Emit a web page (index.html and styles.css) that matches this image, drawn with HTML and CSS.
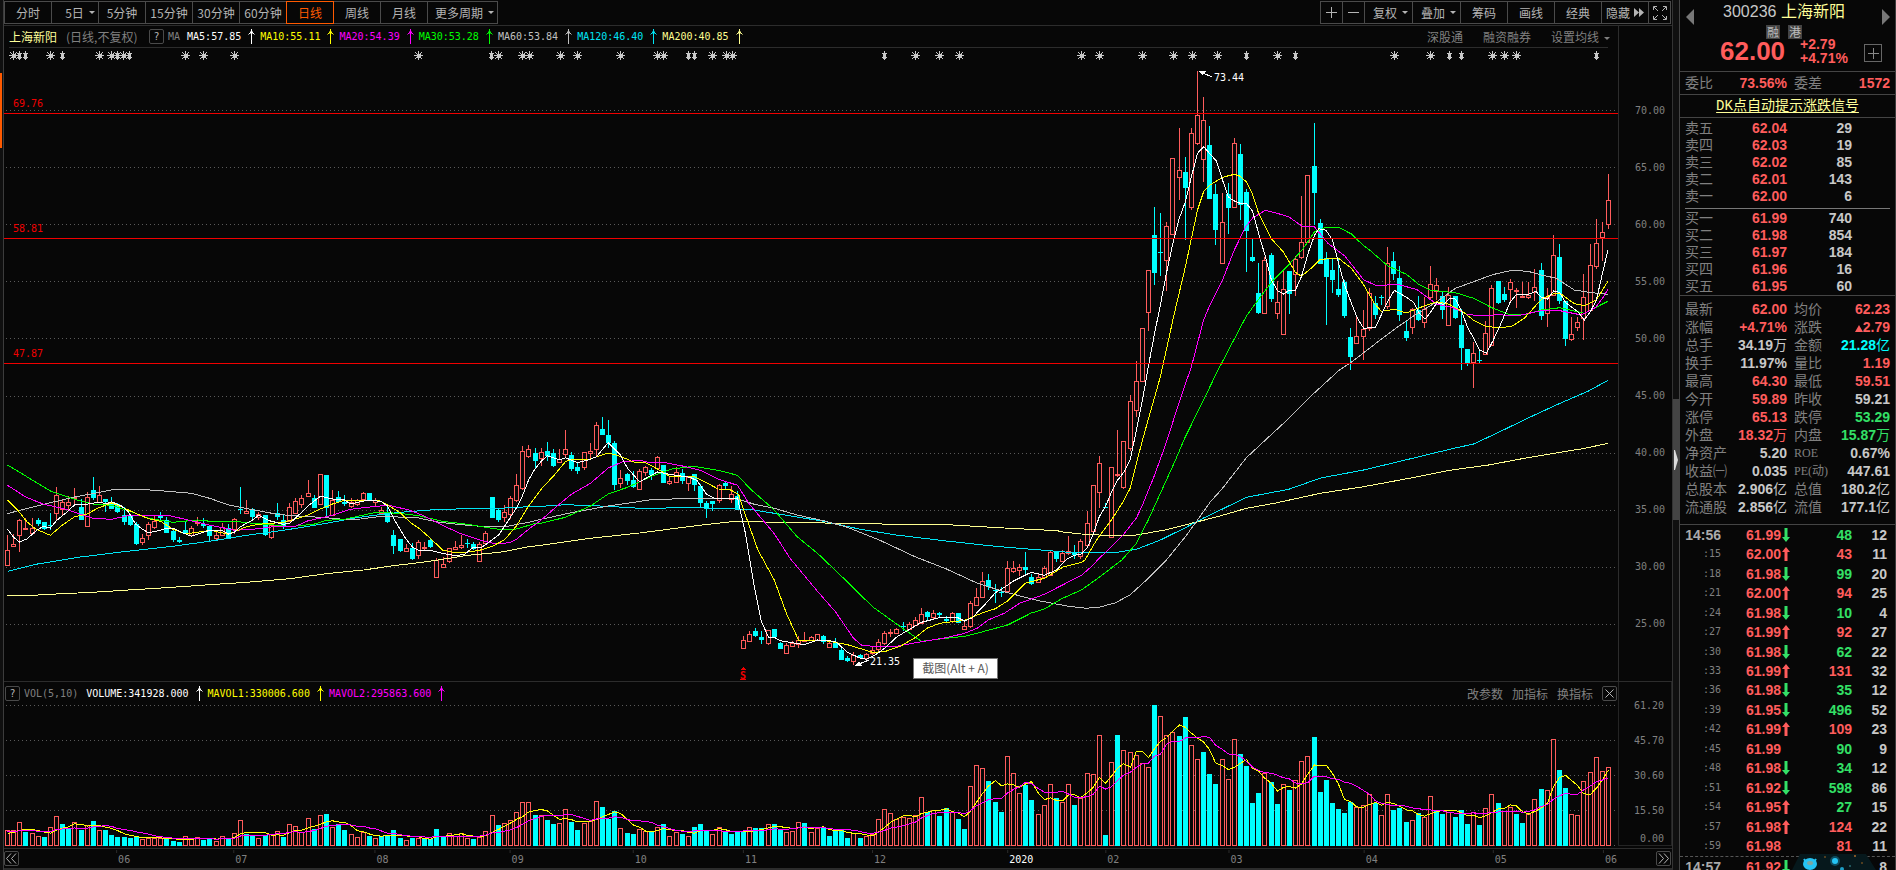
FILE: index.html
```html
<!DOCTYPE html>
<html lang="zh-CN">
<head>
<meta charset="utf-8">
<title>上海新阳 300236</title>
<link rel="stylesheet" href="styles.css">
</head>
<body>
<svg class="defs" aria-hidden="true">
  <symbol id="up" viewBox="0 0 7 15"><path d="M3.5 0v15M0.5 5.5l3-3 3 3M2.5 2.5v2M4.5 2.5v2" fill="none" stroke="currentColor" stroke-width="1"/></symbol>
  <symbol id="tick-up" viewBox="0 0 8 14"><path d="M4 0l4 5H5.500v9h-3V5H0z" fill="currentColor"/></symbol>
  <symbol id="tick-down" viewBox="0 0 8 14"><path d="M4 14l4-5H5.500V0h-3v9H0z" fill="currentColor"/></symbol>
</svg>
<div class="app">
  <aside class="rail"><i class="rail-mark"></i></aside>

  <main class="main">
    <nav class="toolbar">
      <div class="group periods">
        <button>分时</button><button class="drop">5日</button><button>5分钟</button><button>15分钟</button><button>30分钟</button><button>60分钟</button><button class="active">日线</button><button>周线</button><button>月线</button><button class="drop wide">更多周期</button>
      </div>
      <div class="group tools">
        <button class="sq" aria-label="放大"><svg width="13" height="13"><path d="M6.500 1v11M1 6.500h11"/></svg></button><button class="sq" aria-label="缩小"><svg width="13" height="13"><path d="M1 6.500h11"/></svg></button><button class="drop">复权</button><button class="drop">叠加</button><button>筹码</button><button>画线</button><button>经典</button><button class="hide">隐藏<svg width="10" height="9"><path class="solid" d="M0 0l5 4.500-5 4.500zM5 0l5 4.500-5 4.500z"/></svg></button><button class="sq" aria-label="全屏"><svg width="14" height="14"><path d="M.5 4V.5H4M10 .5h3.500V4M13.500 10v3.500H10M4 13.500H.5V10M1 1l4 4M13 1L9 5M13 13L9 9M1 13l4-4"/></svg></button>
      </div>
    </nav>

    <section class="price">
      <div class="plot">
        <header class="legend">
          <span class="name">上海新阳</span><span class="mode">(日线,不复权)</span><button class="help">?</button><span class="ma">MA</span>
          <span class="ind c-w">MA5:57.85<svg><use href="#up"/></svg></span><span class="ind c-y">MA10:55.11<svg><use href="#up"/></svg></span><span class="ind c-m">MA20:54.39<svg><use href="#up"/></svg></span><span class="ind c-g">MA30:53.28<svg><use href="#up"/></svg></span><span class="ind c-s">MA60:53.84<svg><use href="#up"/></svg></span><span class="ind c-c">MA120:46.40<svg><use href="#up"/></svg></span><span class="ind c-l">MA200:40.85<svg><use href="#up"/></svg></span>
          <span class="links"><a href="#">深股通</a><a href="#">融资融券</a><a href="#" class="drop">设置均线</a></span>
        </header>
        <svg id="price" class="chart" viewBox="4 48 1614 633" preserveAspectRatio="none"></svg>
      </div>
      <div class="axis"><span>70.00</span><span>65.00</span><span>60.00</span><span>55.00</span><span>50.00</span><span>45.00</span><span>40.00</span><span>35.00</span><span>30.00</span><span>25.00</span></div>
      <div class="tooltip" role="tooltip">截图(Alt + A)</div>
    </section>

    <section class="volume">
      <div class="plot">
        <header class="legend">
          <button class="help">?</button><span class="vol">VOL(5,10)</span>
          <span class="ind c-w">VOLUME:341928.000<svg><use href="#up"/></svg></span><span class="ind c-y">MAVOL1:330006.600<svg><use href="#up"/></svg></span><span class="ind c-m">MAVOL2:295863.600<svg><use href="#up"/></svg></span>
          <span class="links"><a href="#">改参数</a><a href="#">加指标</a><a href="#">换指标</a><button class="help" aria-label="关闭"><svg width="9" height="9"><path d="M.5.5l8 8M8.500.5l-8 8"/></svg></button></span>
        </header>
        <svg id="volume" class="chart" viewBox="4 703 1614 145" preserveAspectRatio="none"></svg>
      </div>
      <div class="axis"><span>61.20</span><span>45.70</span><span>30.60</span><span>15.50</span><span class="zero">0.00</span></div>
    </section>

    <footer class="dates">
      <button class="help" aria-label="向前"><svg width="11" height="11"><path d="M5 .5l-4.500 5 4.500 5M10 .5l-4.500 5 4.500 5"/></svg></button>
      <svg id="dates" viewBox="20 849 1635 18" preserveAspectRatio="none"></svg>
      <button class="help" aria-label="向后"><svg width="11" height="11"><path d="M1 .5l4.500 5-4.500 5M6 .5l4.500 5-4.500 5"/></svg></button>
    </footer>
  </main>

  <div class="splitter"><i class="thumb"><svg width="4" height="20"><path d="M0 0h1l3 10-3 10H0z"/></svg></i></div>

  <aside class="quote">
    <header class="head">
      <button class="prev" aria-label="上一只"></button>
      <div class="title"><span class="code">300236</span> <span class="stock">上海新阳</span></div>
      <button class="next" aria-label="下一只"></button>
      <div class="tags"><b>融</b><b>港</b></div>
      <div class="last"><strong>62.00</strong><div class="chg"><span>+2.79</span><span>+4.71%</span></div><button class="add" aria-label="加自选"><svg width="11" height="11"><path d="M5.500 0v11M0 5.500h11"/></svg></button></div>
    </header>
    <div class="ratio"><span>委比</span><b class="r">73.56%</b><span>委差</span><b class="r">1572</b></div>
    <div class="signal"><a href="#">DK点自动提示涨跌信号</a></div>
    <table class="book">
      <tbody>
      <tr><th>卖五</th><td class="r">62.04</td><td>29</td></tr>
      <tr><th>卖四</th><td class="r">62.03</td><td>19</td></tr>
      <tr><th>卖三</th><td class="r">62.02</td><td>85</td></tr>
      <tr><th>卖二</th><td class="r">62.01</td><td>143</td></tr>
      <tr><th>卖一</th><td class="r">62.00</td><td>6</td></tr>
      </tbody>
    </table>
    <hr class="spread">
    <table class="book">
      <tbody>
      <tr><th>买一</th><td class="r">61.99</td><td>740</td></tr>
      <tr><th>买二</th><td class="r">61.98</td><td>854</td></tr>
      <tr><th>买三</th><td class="r">61.97</td><td>184</td></tr>
      <tr><th>买四</th><td class="r">61.96</td><td>16</td></tr>
      <tr><th>买五</th><td class="r">61.95</td><td>60</td></tr>
      </tbody>
    </table>
    <table class="stats">
      <tbody>
      <tr><th>最新</th><td class="r">62.00</td><th>均价</th><td class="r">62.23</td></tr>
      <tr><th>涨幅</th><td class="r">+4.71%</td><th>涨跌</th><td class="r"><i class="tri"></i>2.79</td></tr>
      <tr><th>总手</th><td>34.19<em>万</em></td><th>金额</th><td class="c">21.28<em>亿</em></td></tr>
      <tr><th>换手</th><td>11.97%</td><th>量比</th><td class="r">1.19</td></tr>
      <tr><th>最高</th><td class="r">64.30</td><th>最低</th><td class="r">59.51</td></tr>
      <tr><th>今开</th><td class="r">59.89</td><th>昨收</th><td>59.21</td></tr>
      <tr><th>涨停</th><td class="r">65.13</td><th>跌停</th><td class="g">53.29</td></tr>
      <tr><th>外盘</th><td class="r">18.32<em>万</em></td><th>内盘</th><td class="g">15.87<em>万</em></td></tr>
      <tr><th>净资产</th><td>5.20</td><th class="lat">ROE</th><td>0.67%</td></tr>
      <tr><th>收益㈠</th><td>0.035</td><th class="lat">PE(动)</th><td>447.61</td></tr>
      <tr><th>总股本</th><td>2.906<em>亿</em></td><th>总值</th><td>180.2<em>亿</em></td></tr>
      <tr><th>流通股</th><td>2.856<em>亿</em></td><th>流值</th><td>177.1<em>亿</em></td></tr>
      </tbody>
    </table>
    <div id="ticks" class="ticks"></div>
    <div id="next-minute" class="ticks minute"></div>
    <svg class="pet" viewBox="0 0 84 17" aria-hidden="true">
      <path d="M8 1h66l10 16H0z" fill="#06181c"/>
      <ellipse cx="18" cy="11" rx="7" ry="6" fill="#25c4f4"/><ellipse cx="18" cy="10" rx="3" ry="2" fill="#7ba7a4"/><path d="M12 6l2 3M24 6l-2 3" stroke="#25c4f4" stroke-width="2"/>
      <circle cx="43" cy="8" r="3" fill="#25c4f4"/><circle cx="43" cy="8" r="5" fill="#25c4f4" opacity=".3"/>
      <circle cx="50" cy="16" r="2" fill="#1e9ec4"/><circle cx="63" cy="3" r="1" fill="#a86a2c"/><circle cx="33" cy="4" r="1" fill="#6a4a20"/><circle cx="70" cy="10" r="1" fill="#6a4a20"/><circle cx="58" cy="13" r="1" fill="#2a6a70"/>
    </svg>
  </aside>
</div>
<script src="chart.js"></script>
</body>
</html>
```
FILE: styles.css
```css
* { box-sizing: border-box; }
body {
  margin: 0;
  background: #070707;
  color: #808080;
  font: 12px/1 "Liberation Sans", "Noto Sans CJK SC", sans-serif;
}
button { margin: 0; padding: 0; background: none; border: 1px solid #4a4a4a; color: #b4b4b4; font: inherit; }
a { color: inherit; text-decoration: none; }
svg { display: block; }
.defs { position: absolute; width: 0; height: 0; }
.app { display: grid; grid-template-columns: 4px minmax(0, 1fr) 7px 216px; height: 100vh; overflow: hidden; }

.rail { background: #101010; border-right: 1px solid #3c3c3c; padding-top: 73px; }
.rail-mark { display: block; width: 2px; height: 75px; background: #ff5a00; }

.main { display: flex; flex-direction: column; border-right: 1px solid #333; border-bottom: 2px solid #2c2c2c; min-width: 0; }
.toolbar { display: flex; justify-content: space-between; height: 25px; padding: 1px 1px 1px 0; }
.group { display: flex; }
.group button { display: flex; align-items: center; justify-content: center; width: 48px; height: 23px; margin-right: -1px; font-family: "Noto Sans CJK SC", sans-serif; }
.group .sq { width: 23px; }
.group .wide { width: 71px; }
.tools .drop { width: 49px; }
.group button:last-child { margin-right: 0; }
.group .active { position: relative; border-color: #ff5a00; color: #ff5a00; }
.drop::after { content: ""; display: inline-block; border: 3px solid transparent; border-top-color: currentColor; border-bottom: 0; margin-left: 5px; vertical-align: middle; }
.group .drop { padding-left: 4px; }
.periods .drop:nth-child(2) { padding-left: 10px; }
.toolbar svg, .help svg, .add svg { fill: none; stroke: currentColor; }
.toolbar .solid { fill: currentColor; stroke: none; }
.hide svg { margin-left: 4px; }

.price { position: relative; display: flex; flex: 1; min-height: 0; border-top: 1px solid #2c2c2c; }
.volume { display: flex; height: 167px; border-top: 1px solid #2c2c2c; }
.plot { flex: 1; min-width: 0; display: flex; flex-direction: column; }
.chart { flex: 1; width: 100%; min-height: 0; }
.legend { display: flex; align-items: center; height: 22px; border-bottom: 1px solid #2c2c2c; margin: 0 10px 0 5px; white-space: nowrap; }
.volume .legend { height: 21px; border: 0; margin: 0 1px; padding-top: 2px; }
.help { display: flex; align-items: center; justify-content: center; width: 15px; height: 15px; border-radius: 2px; flex: none; font: 10px/1 "DejaVu Sans Mono", monospace; }
.name { color: #ffff99; font-family: "Noto Sans CJK SC", sans-serif; margin-right: 9px; }
.mode { font-family: "Noto Sans CJK SC", sans-serif; width: 83px; }
.ma, .vol, .ind, .axis, .chart text, #dates text { font: 10px/1 "DejaVu Sans Mono", monospace; }
.ma { margin: 0 7px 0 4px; }
.vol { margin: 0 8px 0 4px; }
.ind { display: flex; align-items: center; }
.ind svg { width: 7px; height: 15px; margin: 0 5px 0 7px; }
.c-w { color: #fff; } .c-y { color: #ff0; } .c-m { color: #f0f; } .c-g { color: #0f0; }
.c-s { color: #c0c0c0; } .c-c { color: #00e5f5; } .c-l { color: #ffff90; }
.links { margin-left: auto; display: flex; align-items: center; gap: 20px; font-family: "Noto Sans CJK SC", sans-serif; }
.price .links { margin-right: -2px; }
.volume .links { gap: 9px; }

.axis { width: 54px; padding: 56px 7px 0 0; border-left: 1px solid #2c2c2c; text-align: right; overflow: hidden; }
.axis span { display: block; line-height: 57px; }
.volume .axis { padding-top: 6px; border: 1px solid #242424; border-top: 0; margin-bottom: 2px; }
.volume .axis span { line-height: 35px; }
.volume .axis .zero { line-height: 21px; }
.tooltip { position: absolute; left: 909px; bottom: 2px; width: 85px; height: 21px; text-align: center; background: #fff; border: 1px solid #767676; color: #575757; font: 12px/18px "Noto Sans CJK SC", sans-serif; }

.dates { display: flex; align-items: center; height: 20px; border-top: 1px solid #2c2c2c; padding: 0 1px 0 0; }
#dates { flex: 1; min-width: 0; height: 18px; }

.chart path, .chart rect, .chart line { shape-rendering: crispEdges; }
.grid { stroke: #5a5a5a; stroke-dasharray: 1 3; }
.level { stroke: #f00000; }
.up { fill: #070707; stroke: #ff5c5c; }
.down { fill: #0ff; }
.wick-up { stroke: #ff5c5c; }
.wick-down { stroke: #0ff; }
.line { fill: none; stroke: currentColor; }
.mark { fill: #c8c8c8; stroke: #c8c8c8; }
.note { fill: #fff; }
.red { fill: #f00000; }
.chart .split { font-weight: bold; }
#dates text { fill: #808080; }
#dates .year { fill: #fff; }
#dates line { stroke: #2c2c2c; }

.splitter { background: #101010; border-right: 1px solid #444; padding-top: 399px; }
.thumb { display: flex; align-items: center; height: 121px; background: #444; padding-left: 1px; }
.thumb svg { fill: #ddd; }

.quote { position: relative; display: flex; flex-direction: column; overflow: hidden; border-right: 1px solid #3c3c3c; font: 14px/1 "Liberation Sans", "Noto Sans CJK SC", sans-serif; }
.head { display: grid; grid-template-columns: 15px 1fr 15px; height: 72px; border-bottom: 1px solid #444; padding: 3px 5px 0 6px; grid-template-rows: 22px 14px 30px; }
.title { font-size: 16px; line-height: 18px; text-align: center; color: #c8c8c8; padding-right: 8px; }
.stock { color: #ffff99; }
.prev, .next { border: 8px solid transparent; border-left-width: 0; border-right: 8px solid #777; width: 8px; height: 16px; margin-top: 6px; }
.next { border: 8px solid transparent; border-right-width: 0; border-left: 8px solid #777; justify-self: end; }
.tags { grid-column: 1 / 4; display: flex; gap: 8px; padding-left: 80px; }
.tags b { width: 14px; height: 14px; background: #444; color: #bbb; font: 12px/13px "Noto Sans CJK SC", sans-serif; text-align: center; }
.last { grid-column: 1 / 4; display: flex; color: #ff5c5c; padding-left: 34px; align-items: center; }
.last strong { font-size: 26px; line-height: 20px; width: 80px; margin-top: -6px; }
.chg { display: flex; flex-direction: column; font-weight: bold; width: 64px; margin-top: -6px; }
.add { display: flex; align-items: center; justify-content: center; width: 18px; height: 18px; border: 1px solid #666; color: #888; margin-top: -2px; }
.ratio { display: grid; grid-template-columns: 42px 60px 42px 1fr; height: 23px; line-height: 22px; padding: 0 5px; border-bottom: 1px solid #444; }
.ratio b { text-align: right; }
.ratio span:nth-child(3) { padding-left: 7px; }
.signal { height: 23px; line-height: 22px; text-align: center; border-bottom: 1px solid #444; color: #ffff99; font-family: "Liberation Mono", "Noto Sans CJK SC", monospace; }
.signal a { text-decoration: underline; text-underline-offset: 2px; }
.r { color: #ff5c5c !important; } .g { color: #33e066 !important; } .c { color: #0ff !important; }

table { border-collapse: collapse; table-layout: fixed; }
th { font-weight: normal; text-align: left; padding: 0; white-space: nowrap; }
td { font-weight: bold; text-align: right; padding: 0; color: #c8c8c8; white-space: nowrap; }
em { font-style: normal; font-weight: normal; }
.book { margin: 0 5px; width: 167px; }
.signal + .book { margin-top: 1px; }
.book tr { height: 17px; }
.book th { width: 42px; }
.book td:nth-child(2) { width: 60px; }
.spread { width: auto; margin: 4px 5px 0; border: 0; border-top: 1px solid #777; }
.stats { width: 100%; border-top: 1px solid #444; border-bottom: 1px solid #444; margin-top: 1px; border-collapse: separate; border-spacing: 0; padding: 4px 5px 8px; }
.stats tr { height: 18px; }
.stats th { width: 42px; }
.stats td:nth-child(2) { width: 60px; }
.stats th:nth-child(3) { width: 49px; padding-left: 7px; }
.stats .lat { font: 12px/1 "Liberation Serif", "Noto Sans CJK SC", serif; }
.tri { display: inline-block; border: 4px solid transparent; border-top: 0; border-bottom: 7px solid currentColor; }

.ticks { display: flex; flex-direction: column; flex: 1; }
.tick { flex: 1; display: grid; grid-template-columns: 36px 60px 9px 62px 35px; padding-left: 5px; align-items: center; text-align: right; font-weight: bold; color: #c8c8c8; }
.tick time { font: 10px/1 "DejaVu Sans Mono", monospace; color: #808080; }
.tick .full { font: bold 14px/1 "Liberation Sans", sans-serif; color: #aaa; }
.tick svg { width: 8px; height: 14px; justify-self: end; }
.minute { flex: none; height: 14px; border-top: 1px dashed #555; overflow: hidden; }
.minute .tick { flex: none; height: 19px; }
.pet { position: absolute; right: 19px; bottom: 0; width: 84px; height: 17px; }
```
FILE: chart.js
```js
// One record per trading day: high, body top, body bottom, low, direction.
// Heights are in thirds of a pixel below the group's own origin.
const days = [
  [400, `405 451 496 496R,402 433 437 437R,357 360 404 456R,354 383 386 386R,354 383 398 402R,354 360 372 378C,366 366 387 390C,340 376 378 390C,261 286 338 360R,297 307 328 348R,288 307 315 330R,264 290 293 312R,297 321 360 360C,276 292 377 377R,231 270 294 300C,258 286 307 307R,297 297 306 335C,291 306 327 327C,308 312 336 339C,320 345 366 375C,348 348 375 378C,366 372 432 435C,402 415 425 434R,366 373 406 420R,348 362 380 387R,336 345 354 360C,352 360 399 399C,390 393 420 426C,411 420 426 429C,366 390 400 403C,378 385 404 408R,351 366 370 378R,354 372 378 384C,378 378 408 424C,393 406 415 420R,370 382 406 408R,372 384 417 417C,354 358 388 402R,261 327 329 342C,300 334 340 340R,324 327 351 360C,336 343 350 360R,345 346 405 408C,374 374 412 416R,309 340 350 360C,345 360 381 387C,309 322 364 366R,294 304 338 340R,285 295 311 324R,240 280 287 291R,285 294 323 323C,222 223 313 316R,225 225 324 348C,270 301 346 346R,273 291 306 309C,285 306 312 318C,294 307 317 324R,297 299 311 318R,276 280 298 300R,279 279 303 303C,294 300 307 318R,321 331 340 345R,318 340 366 369C,390 405 438 462C,417 417 453 456C,432 445 452 452R,430 444 477 480C,420 427 464 476R,426 441 443 450R,414 420 441 444C,474 481 532 532R,471 493 500 502R,445 445 482 488R,424 442 446 450R,405 436 440 447R,417 429 431 444C,426 432 447 450C,426 433 482 482R,393 400 428 432R,291 291 354 354C,324 330 360 366C,315 337 350 366R,288 295 341 358R,222 256 299 306R,138 154 263 270R,136 148 169 174R,144 159 183 204C,144 157 173 198R,126 153 168 183C,147 159 198 201C,148 176 186 190R,90 146 161 172R,156 165 207 213C,186 201 213 222C,156 157 200 210R,129 154 160 174R,66 76 146 170R,51 87 105 105C,60 105 130 144C,123 129 255 270C,210 235 248 264R,219 222 243 255C,213 240 261 264C,207 214 268 268R,198 202 217 228R,205 210 225 240C,168 172 205 207R,195 195 249 249C,228 244 250 255R,201 217 245 245R,207 219 243 252C,228 232 250 273R,222 222 255 273C,252 258 309 321C,303 309 327 354C,303 303 312 333C,252 256 299 308R,246 249 258 267C,258 283 298 308R,273 289 330 330C,708 721 743 748R,694 703 724 726R,684 693 708 711C,694 711 720 732C,691 691 728 734R,687 687 711 711C,726 729 747 747C,729 736 758 762R,724 730 737 741R,708 721 731 744R,696 719 722 722R,708 712 720 724R,703 703 720 724R,705 708 726 732C,723 730 740 741R,714 729 744 744C,741 750 780 780C,768 774 783 787C,756 766 784 795R,762 765 774 776C,759 763 775 778R,741 751 760 764R,717 727 748 752R,694 700 730 734R,688 697 700 712R,684 688 699 703R,666 678 682 692C,666 673 687 690R,651 661 676 678R,624 643 668 670R,633 636 652 662C,630 640 652 656R,636 639 645 651C,648 657 663 670C,636 640 664 668R,639 639 669 669C,666 679 688 688R,603 610 677 684R,564 592 616 618R,516 544 590 594R,522 540 560 570C,552 571 574 608C,561 576 579 591C,483 505 574 576R,483 505 514 520R,492 502 509 527R,456 501 510 528C,522 531 552 555C,522 532 545 546R,498 505 532 534R,454 457 524 526R,455 455 477 486C,450 460 482 484R,408 454 458 464R,435 456 466 476C,418 424 467 476R,333 370 434 436R,256 256 394 400R`],
  [60, `1188 1210 1295 1344R,1330 1341 1343 1343C,1222 1222 1432 1434R,1110 1242 1245 1252R,1144 1144 1280 1286R,1005 1024 1165 1172R,903 964 1049 1070R,805 805 964 964R,631 631 755 812R,441 525 639 675C,459 576 579 648C,486 499 599 693R,295 295 523 525R,204 331 352 420R,291 336 384 540C,204 220 440 450R,33 166 248 254R,111 181 298 366R,198 255 416 416C,372 402 510 555C,399 487 610 610R,369 402 444 522C,234 250 440 440R,252 282 435 480C,387 396 513 636C,537 591 603 606C,609 699 759 762C,591 601 760 760R,579 585 717 726C,664 727 760 777R,631 688 823 823R,633 633 702 762C,588 598 643 708R,408 547 590 596R,346 346 547 549R,189 318 399 495C,477 489 612 612C,576 594 651 795C,597 630 660 699C,597 687 705 711C,660 666 768 774C,804 831 891 930C,772 829 850 852R,750 808 829 900R,684 700 805 812R,708 729 766 777C,705 711 715 735C,561 610 737 746R,576 603 642 660C,618 654 765 783C,783 813 834 843C,745 748 802 822R,708 750 780 783C,711 748 785 804R,618 673 710 716R,654 676 694 720R,697 708 750 777C,681 706 794 798R,708 708 774 777C,747 795 864 930C,867 867 909 918C,846 880 907 984R,870 900 903 908C,783 820 883 885R,675 685 854 857R,663 663 729 732C,681 702 720 726C,657 667 688 726R,684 690 694 744R,666 708 711 711R,666 706 712 718R,627 682 697 724R,609 630 768 780C,684 712 760 801R,525 586 706 708R,552 591 723 732C,723 723 837 858C,771 823 838 843R,771 787 800 812R,642 712 775 840R,552 616 751 751R,477 550 617 627R,486 517 532 603R,342 421 493 507R`],
];

// Moving averages, three stretches each: x in 1/2.8 px, y in 1/3 px from the stretch origin.
const origins = [[0, 400], [540, 400], [1060, 60]];
const averages = {
  'c-l': ['21,587 90,586 158,582 259,577 346,571 466,563 587,554 690,547 811,536 914,521 1018,510 1102,497 1188,486 1239,478 1309,466 1400,457 1480,440', '3,436 141,415 279,399 430,378 530,366 586,364 650,367 860,370 1000,373 1155,375 1300,384 1450,392', '0,1415 60,1422 144,1427 214,1425 298,1409 368,1390 438,1371 522,1345 600,1330 729,1300 850,1280 987,1253 1091,1231 1200,1215 1300,1195 1400,1177 1470,1165 1534,1150'],
  'c-c': ['21,514 105,492 225,471 340,456 483,439 587,424 690,406 794,391 897,373 1000,353 1069,343 1120,337 1205,330 1300,326 1400,325 1480,320', '3,319 71,314 191,319 279,325 430,323 586,328 656,340 794,364 897,388 998,405 1138,423 1275,439 1446,454', '0,1475 60,1479 160,1477 214,1468 281,1440 351,1403 402,1374 455,1347 522,1312 640,1288 730,1254 850,1230 987,1195 1091,1168 1158,1152 1228,1117 1315,1072 1400,1030 1480,993 1534,961'],
  'c-s': ['21,341 55,331 122,313 209,291 259,281 312,270 346,268 390,268 449,272 536,280 587,295 640,315 707,329 777,343 840,349 900,352 960,358 1010,357 1069,349 1135,352 1172,354 1230,367 1309,376 1360,380 1420,379 1480,367', '3,358 88,338 191,318 312,299 430,295 530,295 553,296 600,313 656,325 720,345 794,362 861,382 950,420 1050,470 1138,507 1225,550 1309,578 1396,602 1480,619 1530,625 1568,621', '154,1629 196,1605 240,1562 298,1500 351,1430 385,1380 420,1327 455,1285 522,1193 575,1140 643,1073 713,998 780,932 820,903 883,851 936,808 987,770 1055,725 1107,685 1158,665 1211,644 1265,631 1310,634 1348,645 1390,655 1440,690 1480,697 1534,703'],
  'c-g': ['21,195 72,228 141,273 209,298 259,312 312,316 362,333 416,355 483,367 553,360 600,365 656,364 707,370 760,374 811,380 878,373 914,361 965,358 1052,337 1119,340 1172,347 1239,364 1309,373 1376,385 1412,390 1446,387 1496,371', '3,370 71,352 141,318 191,282 245,262 312,229 370,207 430,199 499,211 553,226 590,268 656,330 720,410 777,460 861,546 931,620 1018,687 1068,724 1119,717 1189,709 1240,695 1309,675 1376,639 1412,627 1463,595 1516,570 1568,530', '173,1500 214,1450 248,1378 281,1300 318,1213 351,1130 402,1020 438,940 488,837 522,768 556,718 592,667 640,615 680,567 713,515 745,502 780,502 816,522 850,557 867,570 917,617 970,643 1004,673 1037,691 1107,698 1158,715 1211,744 1255,762 1300,764 1348,750 1400,743 1468,760 1534,724'],
  'c-m': ['21,256 72,291 122,313 175,325 209,337 259,355 312,358 362,346 470,346 530,361 590,376 656,391 707,388 760,381 827,379 861,363 931,346 981,328 1052,319 1090,316 1145,330 1188,348 1239,376 1290,401 1343,420 1376,429 1410,430 1429,427 1446,418 1480,388', '3,360 55,312 88,283 141,250 191,204 230,186 279,181 312,189 346,187 399,198 449,211 499,237 553,256 586,312 656,401 700,475 777,574 827,635 878,715 900,735 931,739 998,739 1068,725 1138,713 1189,700 1225,684 1255,660 1300,640 1343,610 1412,583 1463,555 1516,526 1550,494', '105,1500 144,1460 178,1423 214,1374 231,1335 265,1245 298,1147 334,1025 368,920 402,780 419,737 455,660 488,570 520,500 540,473 575,451 605,459 640,470 680,500 713,501 750,550 797,587 850,659 883,676 950,674 1000,689 1055,733 1100,743 1141,764 1190,767 1228,764 1278,768 1348,752 1400,752 1460,765 1500,742 1519,715 1534,688'],
  'c-y': ['21,300 55,337 75,365 100,387 141,406 175,375 209,350 242,343 275,324 312,309 346,323 379,340 416,356 450,364 483,387 519,402 553,397 590,391 640,403 690,380 724,373 794,367 827,357 861,346 897,327 931,312 965,301 1060,301 1085,315 1119,337 1150,368 1172,384 1205,415 1239,450 1275,458 1309,456 1343,451 1376,440 1412,420 1446,378 1480,318', '3,268 40,225 71,185 88,178 141,177 191,159 225,169 262,186 295,188 329,207 363,229 430,229 466,248 499,267 530,268 556,283 575,345 610,450 656,540 690,640 724,721 794,721 861,734 931,757 965,755 1010,738 1050,713 1085,684 1119,670 1189,661 1240,638 1275,626 1309,603 1360,549 1412,535 1465,501 1516,487', '70,1500 94,1455 110,1428 144,1380 178,1323 197,1283 214,1210 231,1140 248,1075 281,950 318,770 351,620 385,450 402,395 419,376 455,352 488,343 505,349 522,366 539,403 556,460 592,536 626,577 659,637 676,649 700,628 729,598 780,595 816,625 850,674 880,730 900,754 936,748 970,759 1004,744 1055,725 1090,733 1130,757 1158,781 1190,798 1228,804 1265,799 1300,775 1348,718 1382,701 1400,700 1440,731 1468,737 1502,720 1534,664'],
  'c-w': ['21,388 38,412 55,426 75,417 105,389 122,379 141,384 158,362 185,338 195,328 209,315 242,313 275,307 300,311 312,305 340,318 360,336 379,372 399,388 416,398 440,393 470,384 490,387 515,400 536,409 553,403 587,391 620,391 640,402 656,397 673,380 707,360 724,346 757,363 794,373 811,370 827,355 861,319 897,289 931,297 965,300 981,312 1018,303 1052,302 1069,306 1085,318 1102,355 1135,415 1155,441 1172,451 1205,451 1239,460 1275,467 1300,463 1326,442 1350,441 1365,430 1396,405 1412,380 1446,324 1463,287 1480,240 1496,210', '3,184 21,167 55,180 71,173 105,188 141,178 158,170 191,128 225,165 245,205 279,245 329,216 379,226 420,232 440,242 466,282 490,296 519,296 553,294 575,400 600,560 620,665 640,712 656,712 673,722 700,727 740,734 777,720 827,724 861,757 897,775 914,778 940,764 965,745 1000,710 1035,688 1068,667 1119,653 1172,654 1189,663 1209,654 1240,620 1275,578 1292,568 1326,543 1359,525 1376,517 1412,526 1446,510', '20,1497 40,1486 60,1482 77,1462 94,1420 110,1370 127,1340 144,1297 161,1261 180,1235 197,1197 214,1110 231,1020 248,915 265,820 281,735 298,640 318,540 334,475 351,425 368,350 385,280 402,260 438,303 455,360 472,412 490,424 505,430 522,430 539,453 556,520 575,590 592,660 609,692 626,702 643,690 659,690 676,650 696,575 713,525 725,506 745,511 763,540 780,610 797,675 816,730 833,775 850,805 883,802 917,725 936,691 970,712 990,727 1004,757 1022,778 1037,757 1055,728 1074,733 1091,715 1107,717 1124,752 1141,802 1158,834 1175,870 1194,880 1211,845 1230,802 1245,765 1261,725 1278,704 1315,702 1332,694 1348,712 1365,718 1382,693 1399,697 1415,727 1432,741 1451,756 1468,780 1485,755 1502,720 1519,640 1534,570'],
};

const volumes = `451R 451R 427R 455C 460R 469R 471C 442R 409R 432C 448C 427R 449C 436R 423C 451R 449C 465C 471C 471C 474C 468C 478R 474R 474R 475R 474C 483C 486C 469R 474R 472R 480C 476C 484R 469R 474C 460R 421R 462C 465C 475R 466C 463R 454R 471C 433R 439R 457R 415R 447C 406R 402C 442R 433C 450C 463R 472R 457R 468C 475R 469C 466C 450C 474C 481R 474C 475R 478C 478C 447C 469C 460R 469R 460R 475R 477C 471R 454R 406R 435C 430R 421R 397R 367R 367R 405C 406R 420C 432C 430R 388R 426C 450C 430R 424R 364R 381C 417C 393C 445R 459C 462C 448R 452R 455C 440R 432C 469R 457R 462C 469R 441C 432C 453C 463R 442R 455C 462C 456C 456C 442R 444C 444C 433R 432C 448C 457R 454R 427R 429C 457R 445R 444C 468C 450C 450C 474C 458R 474C 469R 463R 418R 388R 400R 418R 412R 415R 406R 352R 397C 391R 408C 384C 396R 417C 447C 319R 256R 265R 303C 366C 396C 229R 280R 340R 315C 360C 403R 376R 313R 354C 367R 313R 375C 355R 280R 283R 166R 465C 247R 165C 211R 217R 226R 250R 262R 75C 109R 166R 157R 168C 111C 196R 238R 216C 282C 312C 238R 298R 178R 222C 258C 369C 339C 280R 306C 372C 313R 330C 301R 244R 229R 171C 336C 300C 369C 387C 399C 366C 382R 376R 343R 369C 406R 343R 390C 384C 426C 421R 399C 412R 349R 394C 402C 397R 411C 390C 432C 397R 435C 385R 343R 369C 394R 382R 402C 429C 403R 358R 327C 331R 178R 270C 324C 403R 406R 304R 277R 232R 274R 262R`.split(' ');

const stars = [13, 50, 99, 111, 123, 185, 203, 234, 418, 498, 522, 529, 560, 577, 620, 657, 663, 712, 726, 732, 915, 939, 959, 1081, 1099, 1142, 1173, 1192, 1217, 1277, 1394, 1430, 1492, 1504, 1516];
const bolts = [19, 25, 62, 117, 129, 491, 688, 694, 884, 1246, 1295, 1449, 1461, 1596];
const months = [[117, '06'], [234, '07'], [375, '08'], [510, '09'], [633, '10'], [743, '11'], [872, '12'], [1007, '2020'], [1105, '02'], [1228, '03'], [1363, '04'], [1492, '05'], [1602, '06']];

const at = i => Math.floor(7.5 + 6.134 * i);
const grid = y => `<line class="grid" x1="6" x2="1616" y1="${y}" y2="${y}"/>`;

let out = '';
for (let k = 0; k < 10; k++) out += grid(Math.floor(110.5 + 57.1 * k) + 0.5);

let i = 0;
for (const [y0, list] of days) {
  for (const rec of list.split(',')) {
    const [hi, top, bot, lo] = rec.split(' ').map(v => Math.round(y0 + parseInt(v, 10) / 3));
    const x = at(i++);
    if (rec.endsWith('R')) {
      const h = Math.max(1, bot - top);
      out += `<path class="wick-up" d="M${x + .5} ${hi}V${top}M${x + .5} ${top + h}V${Math.max(lo, top + h)}"/><rect class="up" x="${x - 1.5}" y="${top + .5}" width="4" height="${h}"/>`;
    } else {
      out += `<path class="wick-down" d="M${x + .5} ${hi}V${lo}"/><rect class="down" x="${x - 2}" y="${top}" width="5" height="${Math.max(1, bot - top)}"/>`;
    }
  }
}

for (const [cls, parts] of Object.entries(averages)) {
  const pts = parts.flatMap((part, n) => part.split(' ').map(p => {
    const [x, y] = p.split(',').map(Number);
    return `${(origins[n][0] + x / 2.8).toFixed(1)} ${(origins[n][1] + y / 3).toFixed(1)}`;
  }));
  out += `<path class="line ${cls}" d="M${pts.join('L')}"/>`;
}

for (const [y, label] of [[113.5, '69.76'], [238.5, '58.81'], [363.5, '47.87']])
  out += `<line class="level" x1="4" x2="1618" y1="${y}" y2="${y}"/><text class="red" x="13" y="${y - 6.500}">${label}</text>`;
for (const x of stars)
  out += `<path class="mark" d="M${x - 1} 54h3v3h-3zM${x + .5} 51v9M${x - 4} 55.500h9M${x - 3} 52l7 7M${x + 4} 52l-7 7"/>`;
for (const x of bolts)
  out += `<path class="mark" d="M${x - .5} 53h2v5h-2zM${x + .5} 51v9M${x - 2} 53.500h5M${x - 2} 57.500h5"/>`;
out += `<path class="note" d="M1199 71l7 0-4 4z"/><path class="line c-w" d="M1203 73l9 4"/><text class="note" x="1214" y="81">73.44</text>`;
out += `<path class="note" d="M855 665.500l7 0-3-4z"/><path class="line c-w" d="M859 664l10-4"/><text class="note" x="870" y="665">21.35</text>`;
out += `<text class="red split" x="740" y="679">S</text><path class="red" d="M743 667l3 3h-6zM740 679h6v1h-6z"/>`;
document.getElementById('price').innerHTML = out;

out = [705.5, 740.5, 775.5, 810.5, 845.5].map(grid).join('');
const tops = volumes.map(v => 680 + parseInt(v, 10) / 3);
volumes.forEach((v, n) => {
  const x = at(n), y = Math.round(tops[n]);
  out += v.endsWith('R')
    ? `<rect class="up" x="${x - 1.5}" y="${y + .5}" width="4" height="${845 - y}"/>`
    : `<rect class="down" x="${x - 2}" y="${y}" width="5" height="${846 - y}"/>`;
});
for (const [cls, span, seed] of [['c-y', 5, 834], ['c-m', 10, 832]]) {
  const pts = tops.map((_, n) => {
    let sum = 0;
    for (let k = 0; k < span; k++) sum += n - k < 0 ? seed : tops[n - k];
    return `${at(n) + .5} ${(sum / span).toFixed(1)}`;
  });
  out += `<path class="line ${cls}" d="M${pts.join('L')}"/>`;
}
document.getElementById('volume').innerHTML = out;

document.getElementById('dates').innerHTML = months.map(([x, t]) =>
  `<line x1="${x + .5}" x2="${x + .5}" y1="849" y2="852"/><text${t.length > 2 ? ' class="year"' : ''} x="${x + 2}" y="862">${t}</text>`).join('');

// time, price, tick direction, volume, volume colour, trades
const trades = [
  ['14:56', '61.99', 'down', 48, 'g', 12], [':15', '62.00', 'up', 43, 'r', 11], [':18', '61.98', 'down', 99, 'g', 20],
  [':21', '62.00', 'up', 94, 'r', 25], [':24', '61.98', 'down', 10, 'g', 4], [':27', '61.99', 'up', 92, 'r', 27],
  [':30', '61.98', 'down', 62, 'g', 22], [':33', '61.99', 'up', 131, 'r', 32], [':36', '61.98', 'down', 35, 'g', 12],
  [':39', '61.95', 'down', 496, 'g', 52], [':42', '61.99', 'up', 109, 'r', 23], [':45', '61.99', '', 90, 'g', 9],
  [':48', '61.98', 'down', 34, 'g', 12], [':51', '61.92', 'down', 598, 'g', 86], [':54', '61.95', 'up', 27, 'g', 15],
  [':57', '61.98', 'up', 124, 'r', 22], [':59', '61.98', '', 81, 'r', 11],
];
const row = ([t, p, dir, vol, col, n]) =>
  `<div class="tick"><time${t.length > 3 ? ' class="full"' : ''}>${t}</time><span class="r">${p}</span>` +
  (dir ? `<svg class="${dir === 'up' ? 'r' : 'g'}"><use href="#tick-${dir}"/></svg>` : '<i></i>') +
  `<span class="${col}">${vol}</span><span>${n}</span></div>`;
document.getElementById('ticks').innerHTML = trades.map(row).join('');
document.getElementById('next-minute').innerHTML = row(['14:57', '61.92', 'down', '', 'g', 8]);
```
